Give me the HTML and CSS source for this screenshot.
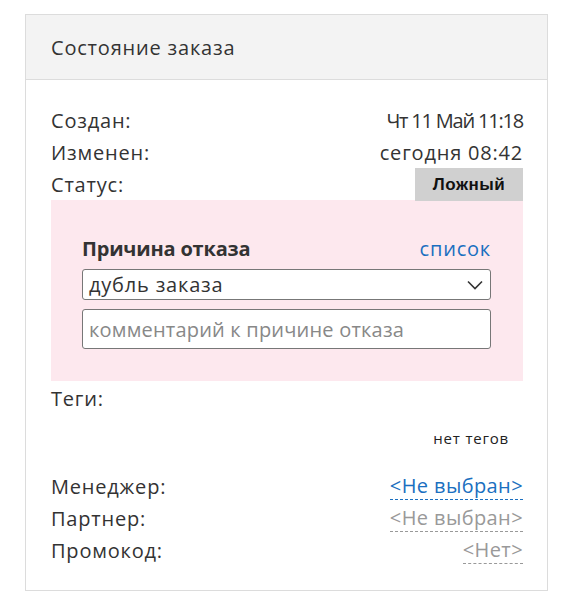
FILE: index.html
```html
<!DOCTYPE html>
<html lang="ru">
<head>
    <meta charset="UTF-8">
    <title>Состояние заказа</title>
    <link rel="stylesheet" href="styles.css">
</head>
<body>
    <div class="card">
        <div class="card-header">Состояние заказа</div>
        <div class="card-body">
            <div class="row">
                <span>Создан:</span>
                <span class="date">Чт 11 Май 11:18</span>
            </div>
            <div class="row">
                <span>Изменен:</span>
                <span>сегодня 08:42</span>
            </div>
            <div class="row">
                <span>Статус:</span>
                <span class="status">Ложный</span>
            </div>

            <!-- Причина отказа -->
            <div class="reason">
                <div class="reason-head">
                    <span class="reason-title">Причина отказа</span>
                    <a href="#" class="link">список</a>
                </div>
                <div class="select">
                    <span>дубль заказа</span>
                    <svg width="16" height="10" viewBox="0 0 16 10"><path d="M1 1.5 L8 8.5 L15 1.5" fill="none" stroke="#333" stroke-width="1.6"/></svg>
                </div>
                <input type="text" class="comment" placeholder="комментарий к причине отказа">
            </div>

            <div class="row tags-row">
                <span>Теги:</span>
            </div>
            <div class="tags">нет тегов</div>

            <div class="row">
                <span>Менеджер:</span>
                <a href="#" class="dashed active">&lt;Не выбран&gt;</a>
            </div>
            <div class="row">
                <span>Партнер:</span>
                <a href="#" class="dashed">&lt;Не выбран&gt;</a>
            </div>
            <div class="row">
                <span>Промокод:</span>
                <a href="#" class="dashed">&lt;Нет&gt;</a>
            </div>
        </div>
    </div>
</body>
</html>
```
FILE: styles.css
```css
body {
    margin: 0;
    padding: 14px 0 0 25px;
    font-family: "Open Sans", Arial, sans-serif;
    font-size: 20px;
    letter-spacing: 0.8px;
    color: #333;
    background-color: white;
}

.card {
    width: 523px;
    height: 577px;
    border: 1px solid #dcdcdc;
    box-sizing: border-box;
}

.card-header {
    background-color: #f3f3f3;
    border-bottom: 1px solid #dcdcdc;
    height: 65px;
    box-sizing: border-box;
    padding: 0 25px;
    display: flex;
    align-items: center;
}

.card-body {
    padding: 24px 24px 0 25px;
}

.row {
    display: flex;
    justify-content: space-between;
    align-items: center;
    height: 32px;
}

.date {
    letter-spacing: -1.2px;
}

.status {
    background-color: #d0d0d0;
    color: #111;
    font-family: "Liberation Sans", Arial, sans-serif;
    font-weight: bold;
    font-size: 17px;
    letter-spacing: 0.5px;
    width: 108px;
    height: 33px;
    display: flex;
    align-items: center;
    justify-content: center;
    align-self: flex-end;
    margin-bottom: -1px;
}

.reason {
    background-color: #fde8ee;
    padding: 34px 32px 32px 31px;
}

.reason-head {
    display: flex;
    justify-content: space-between;
    align-items: center;
    height: 28px;
    margin-bottom: 7px;
}

.reason-title {
    font-weight: bold;
    letter-spacing: -0.2px;
}

.link {
    color: #1a6fc0;
    text-decoration: none;
}

.select {
    display: flex;
    justify-content: space-between;
    align-items: center;
    height: 31px;
    box-sizing: border-box;
    border: 1px solid #777;
    border-radius: 3px;
    background-color: white;
    padding: 0 7px 0 6px;
    margin-bottom: 9px;
}

.comment {
    display: block;
    width: 100%;
    height: 40px;
    box-sizing: border-box;
    border: 1px solid #777;
    border-radius: 3px;
    padding: 0 6px;
    font-family: inherit;
    font-size: 20px;
    letter-spacing: 0.2px;
    color: #333;
}

.comment::placeholder {
    color: #888;
}

.tags-row {
    margin-top: 1px;
}

.tags {
    text-align: right;
    font-size: 15px;
    letter-spacing: 0.8px;
    color: #222;
    padding: 14px 14px 0 0;
    height: 56px;
    box-sizing: border-box;
}

.dashed {
    text-decoration: none;
    color: #999;
    border-bottom: 1px dashed #999;
    line-height: 27px;
    letter-spacing: 0.4px;
    align-self: flex-start;
    margin-top: 2px;
}

.dashed.active {
    color: #1a6fc0;
    border-bottom-color: #1a6fc0;
}
```
